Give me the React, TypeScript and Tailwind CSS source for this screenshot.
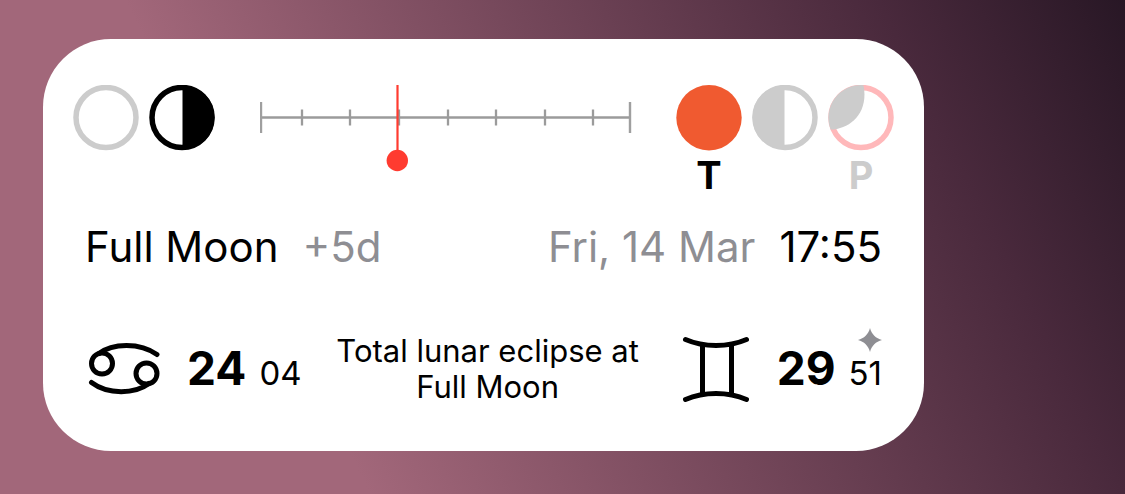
import type { ReactNode } from "react";

const ticks = [42, 90, 139, 188, 236, 285, 333];

function Disc({ label, children }: { label: string; children: ReactNode }) {
  return (
    <svg viewBox="0 0 66 66" className="size-[66px] shrink-0" role="img" aria-label={label}>
      {children}
    </svg>
  );
}

function Timeline() {
  return (
    <svg viewBox="0 0 372 88" className="h-[88px] min-w-0 flex-1" role="img" aria-label="Phase timeline">
      <path d="M1 32.500H371" stroke="#9b9b9b" strokeWidth="2.500" />
      <path d="M1 17V48M370 17V48" stroke="#9f9f9f" strokeWidth="2.400" />
      {ticks.map((x) => (
        <path key={x} d={`M${x} 24.500V40.500`} stroke="#9b9b9b" strokeWidth="2.300" />
      ))}
      <path d="M137.500 0V76" stroke="#ff3b30" strokeWidth="2.200" />
      <circle cx="137.300" cy="75.500" r="10.700" fill="#ff3b30" />
    </svg>
  );
}

function Cancer() {
  return (
    <svg viewBox="0 0 72 54" className="h-[54px] w-[72px] shrink-0" fill="none" stroke="#000" strokeWidth="5" strokeLinecap="round" role="img" aria-label="Cancer">
      <circle cx="14" cy="21.500" r="10.500" />
      <circle cx="58.500" cy="31.500" r="10.500" />
      <path d="M11 11.500C24 1 52 0 69 12.500" />
      <path d="M3.500 40.500C20 53 47 52 61 41.500" />
    </svg>
  );
}

function Gemini() {
  return (
    <svg viewBox="0 0 68 68" className="size-[68px] shrink-0" fill="none" stroke="#000" strokeWidth="5" strokeLinecap="round" role="img" aria-label="Gemini">
      <path d="M3.500 4.500C22 12.500 46 12.500 64.500 4.500" />
      <path d="M3.500 64.500C22 56.500 46 56.500 64.500 64.500" />
      <path d="M20.500 10V59M49.500 10V59" strokeLinecap="butt" />
    </svg>
  );
}

export default function App() {
  return (
    <main className="min-h-screen bg-[linear-gradient(63.6deg,#a2677a_27%,#49293c_82%,#281725_100%)] pt-[39px] pr-[201px] pb-[43px] pl-[43px] font-['Inter',sans-serif] text-black">
      <section className="rounded-[68px] bg-white pt-[46px] pb-[46px]">
        <div className="flex items-start justify-between px-[30px]">
          <div className="flex gap-[10px]">
            <Disc label="New moon">
              <circle cx="33" cy="32.500" r="30" fill="none" stroke="#ccc" strokeWidth="5.500" />
            </Disc>
            <Disc label="First quarter">
              <circle cx="33" cy="32.500" r="30" fill="none" stroke="#000" strokeWidth="5.500" />
              <path d="M33.500 0.500A32 32 0 0 1 33.500 64.500Z" />
            </Disc>
          </div>
          <div className="flex min-w-0 flex-1 pr-[44px] pl-[45px]">
            <Timeline />
          </div>
          <div className="flex gap-[10px]">
            <div className="flex flex-col items-center">
              <Disc label="Total lunar eclipse">
                <circle cx="33" cy="32.700" r="32.700" fill="#f05a30" />
              </Disc>
              <span className="mt-[4px] text-[38px] leading-[40px] font-bold">T</span>
            </div>
            <Disc label="Last quarter">
              <circle cx="33" cy="32.500" r="30" fill="none" stroke="#ccc" strokeWidth="5.500" />
              <path d="M32.500 0.500A32 32 0 0 0 32.500 64.500Z" fill="#ccc" />
            </Disc>
            <div className="flex flex-col items-center">
              <Disc label="Partial solar eclipse">
                <circle cx="33" cy="32.500" r="30" fill="none" stroke="#ffb8ba" strokeWidth="5.500" />
                <path d="M35.500 0.200A32.500 32.500 0 0 0 2.700 44.500C22 44 41 28 35.500 0.200Z" fill="#ccc" />
              </Disc>
              <span className="mt-[4px] text-[38px] leading-[40px] font-bold text-[#ccc]">P</span>
            </div>
          </div>
        </div>

        <div className="mt-[24px] flex items-baseline justify-between px-[42px] text-[42px] leading-[56px] whitespace-nowrap">
          <p className="flex gap-6">
            <span>Full Moon</span>
            <span className="text-[#8e8e93]">+5d</span>
          </p>
          <p className="flex gap-6">
            <span className="text-[#8e8e93]">Fri, 14 Mar</span>
            <span>17:55</span>
          </p>
        </div>

        <div className="mt-[58px] flex items-center justify-between px-[42px]">
          <div className="flex items-center gap-[27px] pl-[3px]">
            <Cancer />
            <p className="flex items-baseline gap-[13px] pt-[2px] leading-[56px]">
              <span className="text-[46px] font-bold">24</span>
              <span className="text-[33px]">04</span>
            </p>
          </div>
          <p className="pr-2 text-center text-[31px] leading-[36px]">
            Total lunar eclipse at
            <br />
            Full Moon
          </p>
          <div className="flex items-center gap-[27px]">
            <Gemini />
            <p className="relative flex items-baseline gap-[13px] pt-[2px] leading-[56px]">
              <span className="text-[46px] font-bold">29</span>
              <span className="text-[33px]">51</span>
              <svg viewBox="0 0 24 24" className="absolute -top-[10px] right-0 size-[24px]" fill="#8e8e93" aria-hidden="true">
                <path d="M12 0C13.500 6 18 10.500 24 12C18 13.500 13.500 18 12 24C10.500 18 6 13.500 0 12C6 10.500 10.500 6 12 0Z" />
              </svg>
            </p>
          </div>
        </div>
      </section>
    </main>
  );
}
